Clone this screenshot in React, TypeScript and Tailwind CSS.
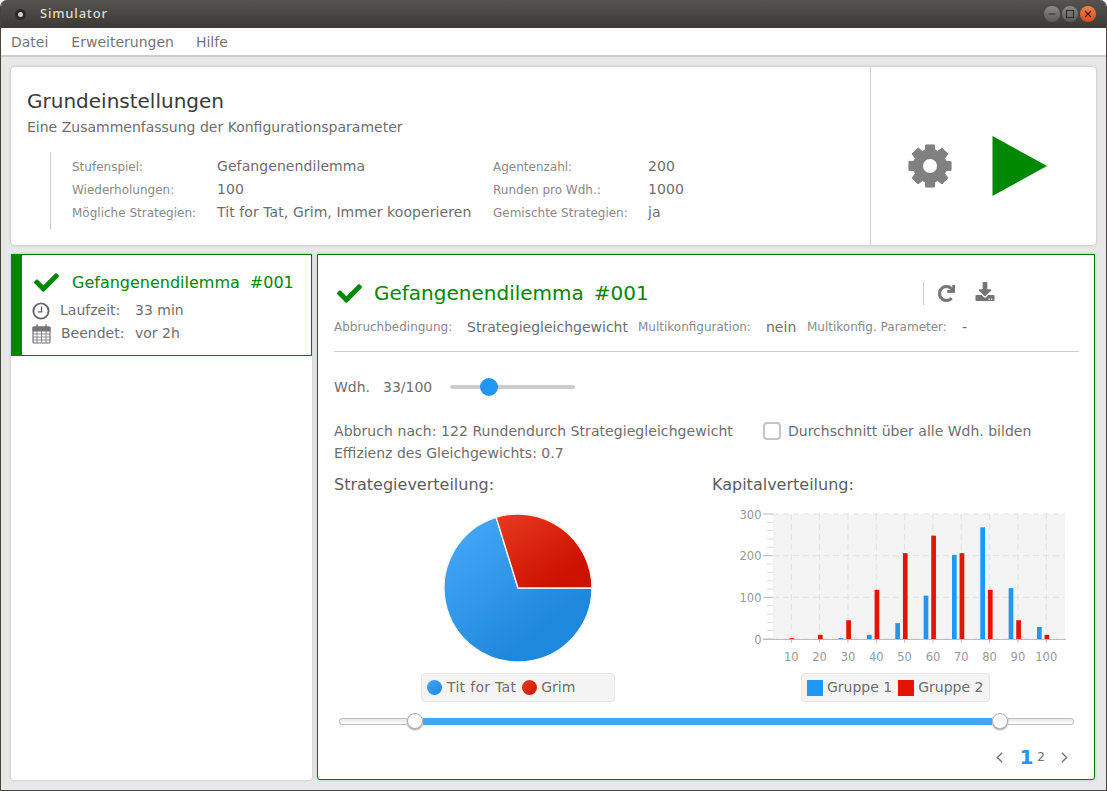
import { FaCheck, FaDownload, FaRedo } from "react-icons/fa";
import { LuChevronLeft, LuChevronRight } from "react-icons/lu";

const dejavu = "font-['DejaVu_Sans',sans-serif]";

const settings = [
  ["Stufenspiel:", "Gefangenendilemma", "Agentenzahl:", "200"],
  ["Wiederholungen:", "100", "Runden pro Wdh.:", "1000"],
  ["Mögliche Strategien:", "Tit for Tat, Grim, Immer kooperieren", "Gemischte Strategien:", "ja"],
];

const blue = [0, 0, 2, 10, 38, 104, 202, 268, 122, 29];
const red = [2, 10, 45, 118, 206, 248, 206, 118, 45, 10];

function gearPath() {
  const pts: string[] = [];
  const cx = 22;
  const cy = 22;
  for (let i = 0; i < 8; i++) {
    const a = (i * Math.PI) / 4 - Math.PI / 2;
    const step = [
      [-0.3, 16.5],
      [-0.2, 21.5],
      [0.2, 21.5],
      [0.3, 16.5],
    ];
    for (const [d, r] of step) {
      pts.push(`${(cx + Math.cos(a + d) * r).toFixed(2)} ${(cy + Math.sin(a + d) * r).toFixed(2)}`);
    }
  }
  return `M${pts.join("L")}Z`;
}

function Gear() {
  return (
    <svg width="44" height="44" viewBox="0 0 44 44">
      <path d={gearPath()} fill="#808080" stroke="#808080" strokeWidth="1" strokeLinejoin="round" />
      <circle cx="22" cy="22" r="7" fill="#fff" />
    </svg>
  );
}

function Clock() {
  return (
    <svg width="18" height="18" viewBox="0 0 18 18" fill="none" stroke="#666666">
      <circle cx="9" cy="9" r="7.6" strokeWidth="1.9" />
      <path d="M9.6 4.5v5.4H5.8" strokeWidth="1.3" />
    </svg>
  );
}

function Calendar() {
  return (
    <svg width="19" height="20" viewBox="0 0 19 20" fill="none" stroke="#757575">
      <rect x="1" y="3" width="17" height="16" rx="1" fill="#fff" strokeWidth="1.2" />
      <path d="M1 3h17v4H1z" fill="#757575" />
      <path d="M1 10h17M1 13h17M1 16h17M5 7v12M9.5 7v12M14 7v12" strokeWidth="0.8" />
      <path d="M5 1v4M14 1v4" strokeWidth="1.6" strokeLinecap="round" />
    </svg>
  );
}

function WindowButton({ close, children }: { close?: boolean; children: React.ReactNode }) {
  return (
    <div
      className={`flex h-[16px] w-[16px] items-center justify-center rounded-full ${
        close ? "bg-gradient-to-b from-[#f37f4a] to-[#dd4814]" : "bg-gradient-to-b from-[#8b8a84] to-[#5a5954]"
      }`}
    >
      <svg width="10" height="10" viewBox="0 0 10 10" fill="none" stroke={close ? "#3c2018" : "#33322e"} strokeWidth="1.2">
        {children}
      </svg>
    </div>
  );
}

function PieChart() {
  return (
    <svg width="152" height="152" viewBox="0 0 152 152">
      <defs>
        <linearGradient id="pieBlue" x1="0.15" y1="0.1" x2="0.7" y2="0.75">
          <stop offset="0" stopColor="#42a5f5" />
          <stop offset="1" stopColor="#1e88dd" />
        </linearGradient>
        <linearGradient id="pieRed" x1="0.05" y1="0" x2="0.75" y2="0.8">
          <stop offset="0" stopColor="#e73a20" />
          <stop offset="1" stopColor="#cc1100" />
        </linearGradient>
      </defs>
      <path
        d="M76 76 L150 76 A74 74 0 1 1 54.1 5.3 Z"
        fill="url(#pieBlue)"
        stroke="#f1f6fb"
        strokeWidth="1.4"
      />
      <path d="M76 76 L54.1 5.3 A74 74 0 0 1 150 76 Z" fill="url(#pieRed)" stroke="#f6f0ee" strokeWidth="1.4" />
    </svg>
  );
}

function BarChart() {
  const x0 = 73;
  const x1 = 365;
  const yTop = 9;
  const yBase = 134;
  const step = 28.33;
  const ticks = blue.map((_, i) => 91.3 + i * step);
  const scale = 125 / 300;
  return (
    <svg width="380" height="160" viewBox="0 0 380 160" className="font-['DejaVu_Sans',sans-serif]">
      <rect x={x0} y={yTop} width={x1 - x0} height={yBase - yTop} fill="#f4f4f4" />
      {[0, 100, 200, 300].map((v) => (
        <line
          key={v}
          x1={x0}
          x2={x1}
          y1={yBase - v * scale}
          y2={yBase - v * scale}
          stroke="#e2e2e2"
          strokeWidth="1"
          strokeDasharray="6 4"
        />
      ))}
      {ticks.map((t) => (
        <line key={t} x1={t} x2={t} y1={yTop} y2={yBase} stroke="#e2e2e2" strokeWidth="1" strokeDasharray="6 4" />
      ))}
      {Array.from({ length: 16 }, (_, i) => i).map((i) => (
        <line
          key={i}
          x1={i % 5 === 0 ? 63 : 67}
          x2={x0}
          y1={yBase - (i * 125) / 15}
          y2={yBase - (i * 125) / 15}
          stroke={i % 5 === 0 ? "#b8b8b8" : "#dcdcdc"}
        />
      ))}
      <line x1={63} x2={366} y1={yBase + 0.5} y2={yBase + 0.5} stroke="#bdbdbd" />
      {ticks.map((t) => (
        <line key={t} x1={t} x2={t} y1={yBase} y2={yBase + 4} stroke="#bdbdbd" />
      ))}
      {ticks.map((t, i) => (
        <g key={t}>
          <rect x={t - 9.3} y={yBase - blue[i] * scale} width="4.7" height={blue[i] * scale} fill="#2196f3" />
          <rect x={t - 1.7} y={yBase - red[i] * scale} width="4.7" height={red[i] * scale} fill="#e51400" />
        </g>
      ))}
      {[0, 100, 200, 300].map((v) => (
        <text key={v} x="61.5" y={yBase - v * scale + 4.5} textAnchor="end" fontSize="11.5" fill="#999999">
          {v}
        </text>
      ))}
      {ticks.map((t, i) => (
        <text key={t} x={t} y="156" textAnchor="middle" fontSize="11.5" fill="#999999">
          {(i + 1) * 10}
        </text>
      ))}
    </svg>
  );
}

export default function App() {
  return (
    <div
      className={`flex h-[791px] w-[1107px] flex-col overflow-hidden rounded-t-[7px] border-x border-b border-[#45443f] bg-[#e8e8e8] ${dejavu}`}
    >
      {/* title bar */}
      <div className="flex h-[28px] shrink-0 items-center bg-gradient-to-b from-[#55534d] to-[#3b3a36] pl-[14px] pr-[10px]">
        <div className="flex h-[11px] w-[11px] items-center justify-center rounded-full bg-[#2a2926]">
          <div className="h-[5px] w-[5px] rounded-full bg-[#cfcdc6]" />
        </div>
        <span className="ml-[14px] font-['Noto_Sans',sans-serif] text-[13px] font-medium tracking-[0.8px] text-[#dfdbd2]">
          Simulator
        </span>
        <div className="ml-auto flex gap-[2px]">
          <WindowButton>
            <path d="M1.5 5h7" />
          </WindowButton>
          <WindowButton>
            <rect x="1.5" y="1.5" width="7" height="7" />
          </WindowButton>
          <WindowButton close>
            <path d="M2 2l6 6M8 2l-6 6" />
          </WindowButton>
        </div>
      </div>

      {/* menu */}
      <div className="flex h-[29px] shrink-0 items-center border-b-2 border-[#cccccc] bg-white pl-[10px] pt-[2px] text-[14px] text-[#757575]">
        <span>Datei</span>
        <span className="ml-[23px]">Erweiterungen</span>
        <span className="ml-[22px]">Hilfe</span>
      </div>

      {/* settings summary */}
      <div className="ml-[10px] mt-[10px] flex h-[178px] w-[1085px] shrink-0 rounded-[4px] bg-white shadow-[0_0_3px_#b0b0b0]">
        <div className="w-[860px] border-r border-[#cfcfcf] pl-[16px] pt-[22px]">
          <h1 className="text-[20px] leading-[24px] text-[#3a3a3a]">Grundeinstellungen</h1>
          <p className="mt-[5px] text-[14px] leading-[18px] text-[#6e6e6e]">
            Eine Zusammenfassung der Konfigurationsparameter
          </p>
          <div className="ml-[23px] mt-[16px] grid h-[77px] w-[700px] grid-cols-[145px_276px_155px_1fr] auto-rows-[23px] content-center items-center border-l border-[#c8c8c8] pb-[2px] pl-[21px]">
            {settings.flat().map((text, i) => (
              <span
                key={text}
                className={i % 2 === 0 ? "text-[12px] text-[#8a8a8a]" : "text-[14px] tracking-[0.08px] text-[#6e6e6e]"}
              >
                {text}
              </span>
            ))}
          </div>
        </div>
        <div className="flex flex-1 items-center pl-[37px] pt-[20px]">
          <Gear />
          <svg width="56" height="62" viewBox="0 0 56 62" className="ml-[39px]">
            <path d="M1.5 1 L56 31 L1.5 61 Z" fill="#008800" />
          </svg>
        </div>
      </div>

      {/* lower area */}
      <div className="ml-[10px] mt-[9px] flex min-h-0 flex-1 gap-[5px] pb-[10px]">
        <div className="w-[301px] rounded-b-[3px] bg-white shadow-[0_0_3px_#b8b8b8]">
          <div className="flex h-[102px] border border-[#007a00] border-l-[11px] border-l-[#008800] pl-[9px] pt-[15px] text-[#6e6e6e]">
            <div className="w-full">
              <div className="flex items-center pl-[2px]">
                <FaCheck className="h-[25px] w-[27px] text-[#008800]" />
                <span className="ml-[12px] text-[16px] text-[#008800]">Gefangenendilemma</span>
                <span className="ml-[10px] text-[16px] text-[#008800]">#001</span>
              </div>
              <div className="mt-[4px] flex h-[23px] items-center pl-px text-[14px]">
                <Clock />
                <span className="ml-[10px] w-[75px]">Laufzeit:</span>
                <span>33 min</span>
              </div>
              <div className="flex h-[23px] items-center pl-px text-[14px]">
                <Calendar />
                <span className="ml-[10px] w-[74px]">Beendet:</span>
                <span>vor 2h</span>
              </div>
            </div>
          </div>
        </div>

        <div className="flex w-[778px] flex-col rounded-b-[3px] border border-[#007a00] bg-white pl-[16px] pr-[15px] text-[#6e6e6e] shadow-[0_0_3px_#b8b8b8]">
          <div className="mt-[25px] flex h-[26px] items-center pl-[2px]">
            <FaCheck className="h-[25px] w-[27px] text-[#008800]" />
            <span className="ml-[11px] text-[20px] text-[#008800]">Gefangenendilemma</span>
            <span className="ml-[10px] text-[20px] text-[#008800]">#001</span>
            <div className="ml-[274px] flex h-[23px] items-center border-l border-[#cccccc] pl-[14px]">
              <FaRedo className="h-[17px] w-[17px] stroke-[#757575] stroke-[24px] text-[#757575]" />
              <FaDownload className="mb-[3px] ml-[20px] h-[19px] w-[20px] text-[#757575]" />
            </div>
          </div>
          <div className="mt-[11px] flex h-[20px] items-center">
            <span className="w-[133px] text-[12px] text-[#8a8a8a]">Abbruchbedingung:</span>
            <span className="w-[171px] text-[14px]">Strategiegleichgewicht</span>
            <span className="w-[128px] text-[12px] text-[#8a8a8a]">Multikonfiguration:</span>
            <span className="w-[41px] text-[14px]">nein</span>
            <span className="w-[155px] text-[12px] text-[#8a8a8a]">Multikonfig. Parameter:</span>
            <span className="text-[14px]">-</span>
          </div>
          <div className="mt-[14px] h-px w-[745px] bg-[#cfcfcf]" />

          <div className="mt-[25px] flex h-[20px] items-center text-[14px]">
            <span className="w-[49px]">Wdh.</span>
            <span className="w-[67px]">33/100</span>
            <div className="h-[4px] w-[31px] rounded-l-full bg-[#cccccc]" />
            <div className="-mx-[1px] z-10 h-[18px] w-[18px] shrink-0 rounded-full bg-[#2196f3]" />
            <div className="h-[4px] w-[78px] rounded-r-full bg-[#cccccc]" />
          </div>

          <div className="mt-[23px] flex h-[22px] items-center text-[14px]">
            <span className="w-[429px] tracking-[0.06px]">Abbruch nach: 122 Rundendurch Strategiegleichgewicht</span>
            <div className="h-[18px] w-[18px] rounded-[4px] border-2 border-[#c4c4c4] bg-white" />
            <span className="ml-[7px]">Durchschnitt über alle Wdh. bilden</span>
          </div>
          <div className="h-[22px] text-[14px] leading-[22px]">Effizienz des Gleichgewichts: 0.7</div>

          <div className="mt-[9px] flex">
            <div className="flex w-[378px] shrink-0 flex-col">
              <h2 className="h-[24px] text-[16px] leading-[24px] text-[#5e5e5e]">Strategieverteilung:</h2>
              <div className="ml-[108px] w-[152px] pt-[15px]">
                <PieChart />
              </div>
              <div className="ml-[87px] mt-[9px] flex h-[29px] w-[194px] items-center rounded-[4px] border border-[#e6e6e6] bg-[#f4f4f4] pl-[5px] text-[14px]">
                <div className="h-[15px] w-[15px] rounded-full bg-gradient-to-br from-[#42a5f5] to-[#1e88dd]" />
                <span className="ml-[5px] tracking-[0.3px]">Tit for Tat</span>
                <div className="ml-[6px] h-[15px] w-[15px] rounded-full bg-gradient-to-br from-[#e73a20] to-[#cc1100]" />
                <span className="ml-[4px]">Grim</span>
              </div>
            </div>
            <div className="flex flex-col">
              <h2 className="h-[24px] text-[16px] leading-[24px] text-[#5e5e5e]">Kapitalverteilung:</h2>
              <div className="-ml-[12px] mt-[8px]">
                <BarChart />
              </div>
              <div className="ml-[89px] mt-[8px] flex h-[29px] w-[189px] items-center rounded-[4px] border border-[#e6e6e6] bg-[#f4f4f4] pl-[5px] text-[14px]">
                <div className="h-[16px] w-[16px] bg-[#2196f3]" />
                <span className="ml-[4px]">Gruppe 1</span>
                <div className="ml-[6px] h-[16px] w-[16px] bg-[#e51400]" />
                <span className="ml-[4px]">Gruppe 2</span>
              </div>
            </div>
          </div>

          <div className="ml-[5px] mt-[10px] flex h-[18px] w-[735px] items-center">
            <div className="h-[7px] w-[68px] rounded-l-full border border-r-0 border-[#bdbdbd] bg-gradient-to-b from-[#e8e8e8] to-white" />
            <div className="z-10 h-[16px] w-[16px] shrink-0 rounded-full border border-[#b0b0b0] bg-white shadow-[0_1px_2px_#999999]" />
            <div className="h-[7px] flex-1 bg-[#42a5f5]" />
            <div className="z-10 h-[16px] w-[16px] shrink-0 rounded-full border border-[#b0b0b0] bg-white shadow-[0_1px_2px_#999999]" />
            <div className="h-[7px] w-[66px] rounded-r-full border border-l-0 border-[#bdbdbd] bg-gradient-to-b from-[#e8e8e8] to-white" />
          </div>

          <div className="mt-[12px] flex h-[30px] items-center justify-end pr-[6px]">
            <LuChevronLeft className="h-[17px] w-[17px] text-[#757575]" />
            <span className="ml-[11px] text-[20px] font-bold text-[#2196f3]">1</span>
            <span className="ml-[4px] text-[12px]">2</span>
            <LuChevronRight className="ml-[11px] h-[17px] w-[17px] text-[#757575]" />
          </div>
        </div>
      </div>
    </div>
  );
}
